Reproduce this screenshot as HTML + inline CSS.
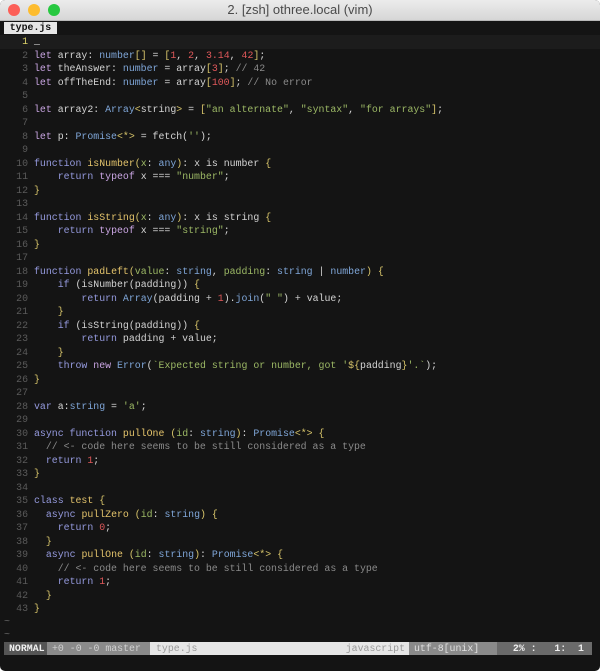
<!DOCTYPE html>
<html><head><meta charset="utf-8"><style>
html,body{margin:0;padding:0;width:600px;height:671px;overflow:hidden;background:#fff}
.win{position:absolute;left:0;top:0;width:600px;height:671px;background:#141414;border-radius:5px;overflow:hidden}
.title{position:absolute;left:0;top:0;width:600px;height:20px;background:linear-gradient(#ececec,#d6d6d6);border-bottom:1px solid #b8b8b8;font:13px "Liberation Sans",sans-serif;color:#4a4a4a;text-align:center;line-height:20px}
.dot{position:absolute;top:4px;width:12px;height:12px;border-radius:50%}
.mono{font-family:"Liberation Mono",monospace;font-size:9.9px}
.tab{position:absolute;left:4px;top:22px;width:53px;height:12px;background:#e6e6e6;color:#111;font-weight:bold;line-height:12px;text-align:center}
.code{position:absolute;left:0;top:35px;width:600px;white-space:normal}
.l{height:13.5px;line-height:13.5px;position:relative;white-space:pre;color:#d4d4d4}
.n{display:inline-block;width:28px;text-align:right;color:#5a5a5a;margin-right:6px}
.k{color:#c9a5e2}.f{color:#959ade}.t{color:#7fa6d8}.y{color:#e3c36b}.g{color:#9cb865}.r{color:#e0585a}.c{color:#8a8a8a}.b{color:#d7c46a}
.tl{position:absolute;left:4px;color:#666}
.sb{position:absolute;top:642px;left:4px;height:13px;line-height:13px;width:588px;display:flex}
.sb div{height:13px;white-space:pre}
</style></head><body><div class="win">
<div class="title">2. [zsh] othree.local (vim)
<div class="dot" style="left:8px;background:#fc5f57"></div>
<div class="dot" style="left:28px;background:#fdbc2e"></div>
<div class="dot" style="left:48px;background:#27c840"></div>
</div>
<div class="tab mono">type.js</div>
<div class="code mono">
<div class="l" style="background:#1c1c1c"><span class="n" style="color:#dcd36a">1</span><span style="color:#fff">_</span></div>
<div class="l"><span class="n">2</span><span class="k">let</span> array: <span class="t">number</span><span class="b">[]</span> = <span class="b">[</span><span class="r">1</span>, <span class="r">2</span>, <span class="r">3.14</span>, <span class="r">42</span><span class="b">]</span>;</div>
<div class="l"><span class="n">3</span><span class="k">let</span> theAnswer: <span class="t">number</span> = array<span class="b">[</span><span class="r">3</span><span class="b">]</span>; <span class="c">// 42</span></div>
<div class="l"><span class="n">4</span><span class="k">let</span> offTheEnd: <span class="t">number</span> = array<span class="b">[</span><span class="r">100</span><span class="b">]</span>; <span class="c">// No error</span></div>
<div class="l"><span class="n">5</span></div>
<div class="l"><span class="n">6</span><span class="k">let</span> array2: <span class="t">Array</span><span class="b">&lt;</span>string<span class="b">&gt;</span> = <span class="b">[</span><span class="g">"an alternate"</span>, <span class="g">"syntax"</span>, <span class="g">"for arrays"</span><span class="b">]</span>;</div>
<div class="l"><span class="n">7</span></div>
<div class="l"><span class="n">8</span><span class="k">let</span> p: <span class="t">Promise</span><span class="b">&lt;*&gt;</span> = fetch(<span class="g">''</span>);</div>
<div class="l"><span class="n">9</span></div>
<div class="l"><span class="n">10</span><span class="f">function</span> <span class="y">isNumber</span><span class="b">(</span><span class="g">x</span>: <span class="t">any</span><span class="b">)</span>: x is number <span class="b">{</span></div>
<div class="l"><span class="n">11</span>    <span class="f">return</span> <span class="k">typeof</span> x === <span class="g">"number"</span>;</div>
<div class="l"><span class="n">12</span><span class="b">}</span></div>
<div class="l"><span class="n">13</span></div>
<div class="l"><span class="n">14</span><span class="f">function</span> <span class="y">isString</span><span class="b">(</span><span class="g">x</span>: <span class="t">any</span><span class="b">)</span>: x is string <span class="b">{</span></div>
<div class="l"><span class="n">15</span>    <span class="f">return</span> <span class="k">typeof</span> x === <span class="g">"string"</span>;</div>
<div class="l"><span class="n">16</span><span class="b">}</span></div>
<div class="l"><span class="n">17</span></div>
<div class="l"><span class="n">18</span><span class="f">function</span> <span class="y">padLeft</span><span class="b">(</span><span class="g">value</span>: <span class="t">string</span>, <span class="g">padding</span>: <span class="t">string</span> | <span class="t">number</span><span class="b">)</span> <span class="b">{</span></div>
<div class="l"><span class="n">19</span>    <span class="f">if</span> (isNumber(padding)) <span class="b">{</span></div>
<div class="l"><span class="n">20</span>        <span class="f">return</span> <span class="t">Array</span>(padding + <span class="r">1</span>).<span class="t">join</span>(<span class="g">" "</span>) + value;</div>
<div class="l"><span class="n">21</span>    <span class="b">}</span></div>
<div class="l"><span class="n">22</span>    <span class="f">if</span> (isString(padding)) <span class="b">{</span></div>
<div class="l"><span class="n">23</span>        <span class="f">return</span> padding + value;</div>
<div class="l"><span class="n">24</span>    <span class="b">}</span></div>
<div class="l"><span class="n">25</span>    <span class="f">throw</span> <span class="k">new</span> <span class="t">Error</span>(<span class="g">`Expected string or number, got '</span><span class="b">${</span>padding<span class="b">}</span><span class="g">'.`</span>);</div>
<div class="l"><span class="n">26</span><span class="b">}</span></div>
<div class="l"><span class="n">27</span></div>
<div class="l"><span class="n">28</span><span class="f">var</span> a:<span class="t">string</span> = <span class="g">'a'</span>;</div>
<div class="l"><span class="n">29</span></div>
<div class="l"><span class="n">30</span><span class="f">async function</span> <span class="y">pullOne</span> <span class="b">(</span><span class="g">id</span>: <span class="t">string</span><span class="b">)</span>: <span class="t">Promise</span><span class="b">&lt;*&gt;</span> <span class="b">{</span></div>
<div class="l"><span class="n">31</span>  <span class="c">// &lt;- code here seems to be still considered as a type</span></div>
<div class="l"><span class="n">32</span>  <span class="f">return</span> <span class="r">1</span>;</div>
<div class="l"><span class="n">33</span><span class="b">}</span></div>
<div class="l"><span class="n">34</span></div>
<div class="l"><span class="n">35</span><span class="f">class</span> <span class="y">test</span> <span class="b">{</span></div>
<div class="l"><span class="n">36</span>  <span class="f">async</span> <span class="y">pullZero</span> <span class="b">(</span><span class="g">id</span>: <span class="t">string</span><span class="b">)</span> <span class="b">{</span></div>
<div class="l"><span class="n">37</span>    <span class="f">return</span> <span class="r">0</span>;</div>
<div class="l"><span class="n">38</span>  <span class="b">}</span></div>
<div class="l"><span class="n">39</span>  <span class="f">async</span> <span class="y">pullOne</span> <span class="b">(</span><span class="g">id</span>: <span class="t">string</span><span class="b">)</span>: <span class="t">Promise</span><span class="b">&lt;*&gt;</span> <span class="b">{</span></div>
<div class="l"><span class="n">40</span>    <span class="c">// &lt;- code here seems to be still considered as a type</span></div>
<div class="l"><span class="n">41</span>    <span class="f">return</span> <span class="r">1</span>;</div>
<div class="l"><span class="n">42</span>  <span class="b">}</span></div>
<div class="l"><span class="n">43</span><span class="b">}</span></div>
</div>
<div class="tl mono" style="top:616px">~</div>
<div class="tl mono" style="top:629px">~</div>
<div class="sb mono">
<div style="width:43px;background:#555;color:#f0f0f0;font-weight:bold;padding-left:5px;box-sizing:border-box">NORMAL</div>
<div style="width:103px;background:#8a8a8a;color:#d0d0d0;padding-left:5px;box-sizing:border-box">+0 -0 -0 master</div>
<div style="flex:1;background:#e6e6e6;color:#9a9a9a;padding-left:6px;box-sizing:border-box;position:relative">type.js<span style="position:absolute;right:4px">javascript</span></div>
<div style="width:88px;background:#8a8a8a;color:#e0e0e0;padding-left:5px;box-sizing:border-box">utf-8[unix]</div>
<div style="width:95px;background:#6a6a6a;color:#f0f0f0;font-weight:bold;text-align:right;padding-right:8px;box-sizing:border-box">2% :   1:  1</div>
</div>
</div></body></html>
